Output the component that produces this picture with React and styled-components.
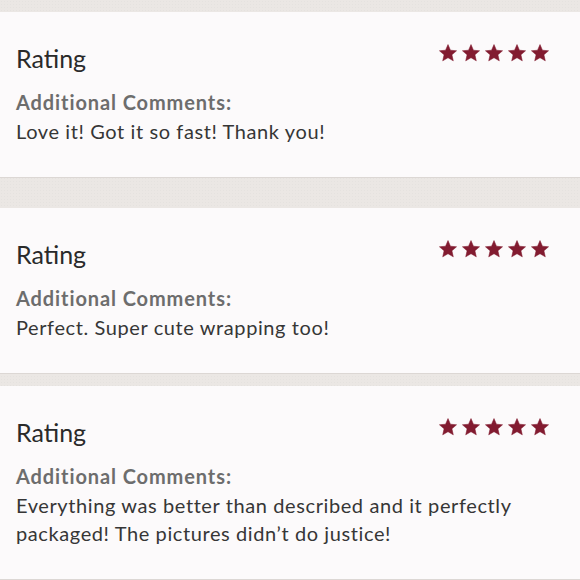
import React from "react";
import styled, { createGlobalStyle } from "styled-components";

const Global = createGlobalStyle`
  html, body { margin: 0; padding: 0; }
  body {
    background: #ebe7e4;
    font-family: Lato, "Open Sans", Arial, sans-serif;
    -webkit-font-smoothing: antialiased;
  }
`;

const Page = styled.div`
  width: 580px;
  min-height: 580px;
  background-color: #ebe7e4;
  background-image: radial-gradient(rgba(0,0,0,0.025) 1px, transparent 1px);
  background-size: 3px 3px;
  padding-top: 12px;
  display: flex;
  flex-direction: column;
`;

const Card = styled.section`
  background: #fcfafb;
  border-bottom: 1px solid #dcd7d4;
  padding: 31px 31px 32px 16px;
  margin-bottom: ${(p) => p.$gap}px;
`;

const Header = styled.div`
  display: flex;
  justify-content: space-between;
  align-items: flex-start;
`;

const Title = styled.h2`
  margin: 0;
  font-size: 25px;
  line-height: 30px;
  font-weight: 400;
  color: #2a2a2a;
`;

const Stars = styled.div`
  display: flex;
  gap: 5px;
  padding-top: 1px;
`;

const Label = styled.div`
  margin-top: 15px;
  font-size: 20px;
  line-height: 28px;
  font-weight: 700;
  letter-spacing: 0.9px;
  color: #6d6d6d;
`;

const Comment = styled.p`
  margin: 1px 0 0;
  font-size: 20px;
  line-height: 28px;
  letter-spacing: 0.6px;
  color: #363636;
  max-width: 510px;
`;

const Star = () => (
  <svg width="18" height="17.5" viewBox="0 0 20 19.4" aria-hidden="true">
    <path
      d="M10 0.6L12.7 6.88L19.51 7.51L14.37 12.02L15.88 18.69L10 15.2L4.12 18.69L5.63 12.02L0.49 7.51L7.3 6.88Z"
      fill="#821b30"
      stroke="#821b30"
      strokeWidth="0.6"
      strokeLinejoin="round"
    />
  </svg>
);

const reviews = [
  { text: "Love it! Got it so fast! Thank you!", gap: 30 },
  { text: "Perfect. Super cute wrapping too!", gap: 12 },
  {
    text:
      "Everything was better than described and it perfectly packaged! The pictures didn\u2019t do justice!",
    gap: 0,
  },
];

export default function App() {
  return (
    <>
      <Global />
      <Page>
        {reviews.map((r, i) => (
          <Card key={i} $gap={r.gap}>
            <Header>
              <Title>Rating</Title>
              <Stars>
                {[0, 1, 2, 3, 4].map((s) => (
                  <Star key={s} />
                ))}
              </Stars>
            </Header>
            <Label>Additional Comments:</Label>
            <Comment>{r.text}</Comment>
          </Card>
        ))}
      </Page>
    </>
  );
}
